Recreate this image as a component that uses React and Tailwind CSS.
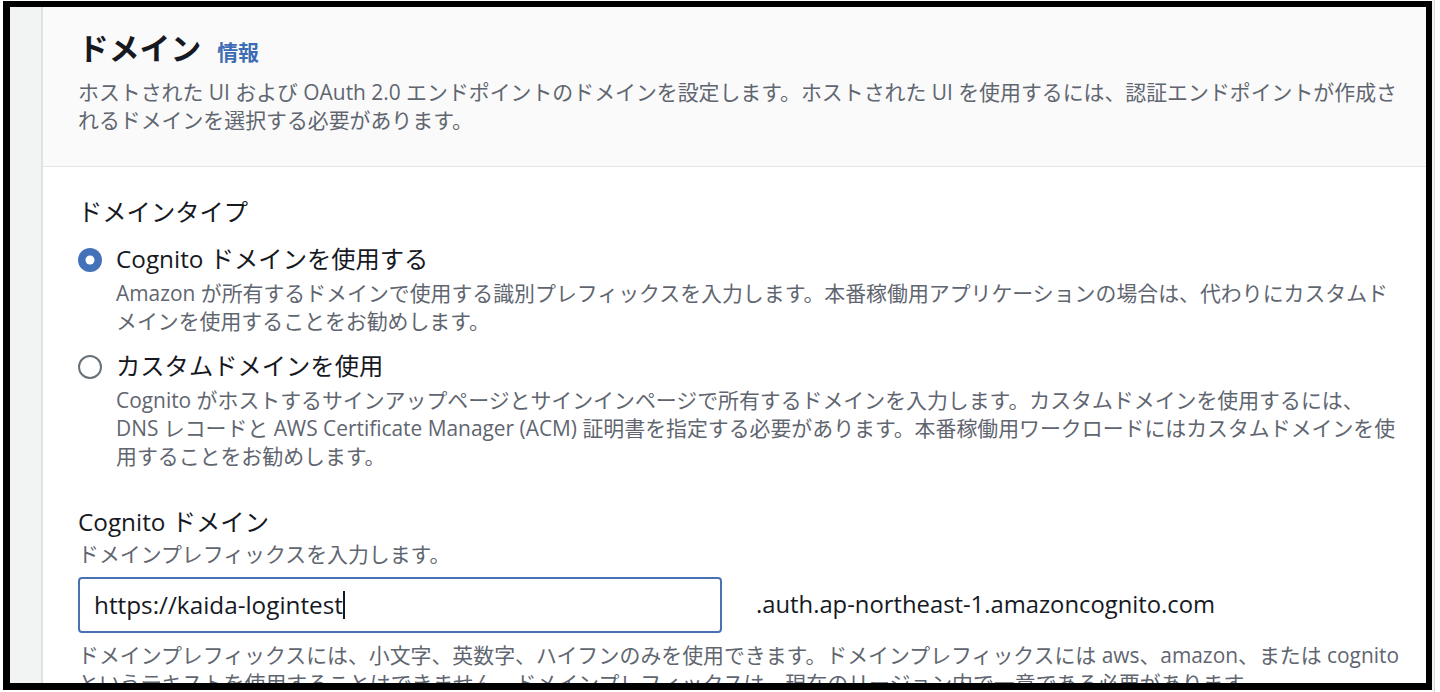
import React from 'react';

const font = { fontFamily: '"Open Sans", "Noto Sans CJK JP", sans-serif' };

const Radio = ({ checked }) =>
  checked ? (
    <svg width="24" height="24" viewBox="0 0 24 24" className="shrink-0 mt-[5px]">
      <circle cx="12" cy="12" r="12" fill="#4472b8" />
      <circle cx="12" cy="12" r="4.5" fill="#ffffff" />
    </svg>
  ) : (
    <svg width="24" height="24" viewBox="0 0 24 24" className="shrink-0 mt-[5px]">
      <circle cx="12" cy="12" r="11" fill="#ffffff" stroke="#687078" strokeWidth="2" />
    </svg>
  );

const RadioOption = ({ checked, label, children, className = '' }) => (
  <div className={`flex gap-[14px] ${className}`}>
    <Radio checked={checked} />
    <div>
      <div className="text-[24.3px] leading-[32px] text-[#16191f]">{label}</div>
      <div className="mt-[4px] text-[20.9px] leading-[28px] text-[#5f6670] whitespace-nowrap">
        {children}
      </div>
    </div>
  </div>
);

export default function App() {
  return (
    <div className="w-[1440px] h-[692px] bg-white overflow-hidden flex items-start" style={font}>
      <div className="w-[3px] shrink-0" />
      {/* framed screenshot */}
      <div className="mt-[1px] w-[1429px] h-[689px] shrink-0 border-black border-l-[7px] border-t-[6px] border-r-[6px] border-b-[7px] bg-[#f2f3f3] flex overflow-hidden">
        <div className="w-[31px] shrink-0" />
        <div className="flex-1 border-l-2 border-[#dfe2e2] bg-white flex flex-col">
          {/* Header */}
          <div className="h-[160px] shrink-0 bg-[#fafafa] border-b border-[#e6e8e8] pl-[35px] pt-[23px]">
            <div className="flex items-baseline">
              <h2 className="text-[30.8px] leading-[36px] font-bold text-[#16191f]">ドメイン</h2>
              <span className="ml-[16px] text-[20.9px] font-bold text-[#3d6cb4]">情報</span>
            </div>
            <p className="mt-[10px] text-[20.9px] leading-[28px] text-[#5f6670] whitespace-nowrap">
              ホストされた UI および OAuth 2.0 エンドポイントのドメインを設定します。ホストされた UI を使用するには、認証エンドポイントが作成さ
              <br />
              れるドメインを選択する必要があります。
            </p>
          </div>

          {/* Body */}
          <div className="pl-[35px] pt-[29px]">
            <div className="text-[24.3px] leading-[32px] text-[#16191f]">ドメインタイプ</div>

            <RadioOption checked className="mt-[15px]" label="Cognito ドメインを使用する">
              Amazon が所有するドメインで使用する識別プレフィックスを入力します。本番稼働用アプリケーションの場合は、代わりにカスタムド
              <br />
              メインを使用することをお勧めします。
            </RadioOption>

            <RadioOption className="mt-[15px]" label="カスタムドメインを使用">
              Cognito がホストするサインアップページとサインインページで所有するドメインを入力します。カスタムドメインを使用するには、
              <br />
              DNS レコードと AWS Certificate Manager (ACM) 証明書を指定する必要があります。本番稼働用ワークロードにはカスタムドメインを使
              <br />
              用することをお勧めします。
            </RadioOption>

            <div className="mt-[36px] text-[24.3px] leading-[32px] text-[#16191f]">Cognito ドメイン</div>
            <div className="mt-[2px] text-[20.9px] leading-[28px] text-[#5f6670]">
              ドメインプレフィックスを入力します。
            </div>

            <div className="mt-[9px] flex items-center">
              <div className="w-[644px] h-[56px] border-2 border-[#4a72b3] rounded-[4px] flex items-center pl-[14px] text-[24.3px] text-[#16191f] bg-white">
                <span>https://kaida-logintest</span>
                <span className="inline-block w-[2px] h-[28px] bg-[#16191f]" />
              </div>
              <span className="ml-[34px] text-[23.8px] text-[#16191f]">
                .auth.ap-northeast-1.amazoncognito.com
              </span>
            </div>

            <p className="mt-[8px] text-[20.9px] leading-[28px] text-[#5f6670] whitespace-nowrap">
              ドメインプレフィックスには、小文字、英数字、ハイフンのみを使用できます。ドメインプレフィックスには aws、amazon、または cognito
              <br />
              というテキストを使用することはできません。ドメインプレフィックスは、現在のリージョン内で一意である必要があります。
            </p>
          </div>
        </div>
      </div>
      <div className="w-[2px] h-full shrink-0 bg-[#f2f3f3]" />
      <div className="w-[1px] h-full shrink-0 bg-[#d5dbdb]" />
    </div>
  );
}
